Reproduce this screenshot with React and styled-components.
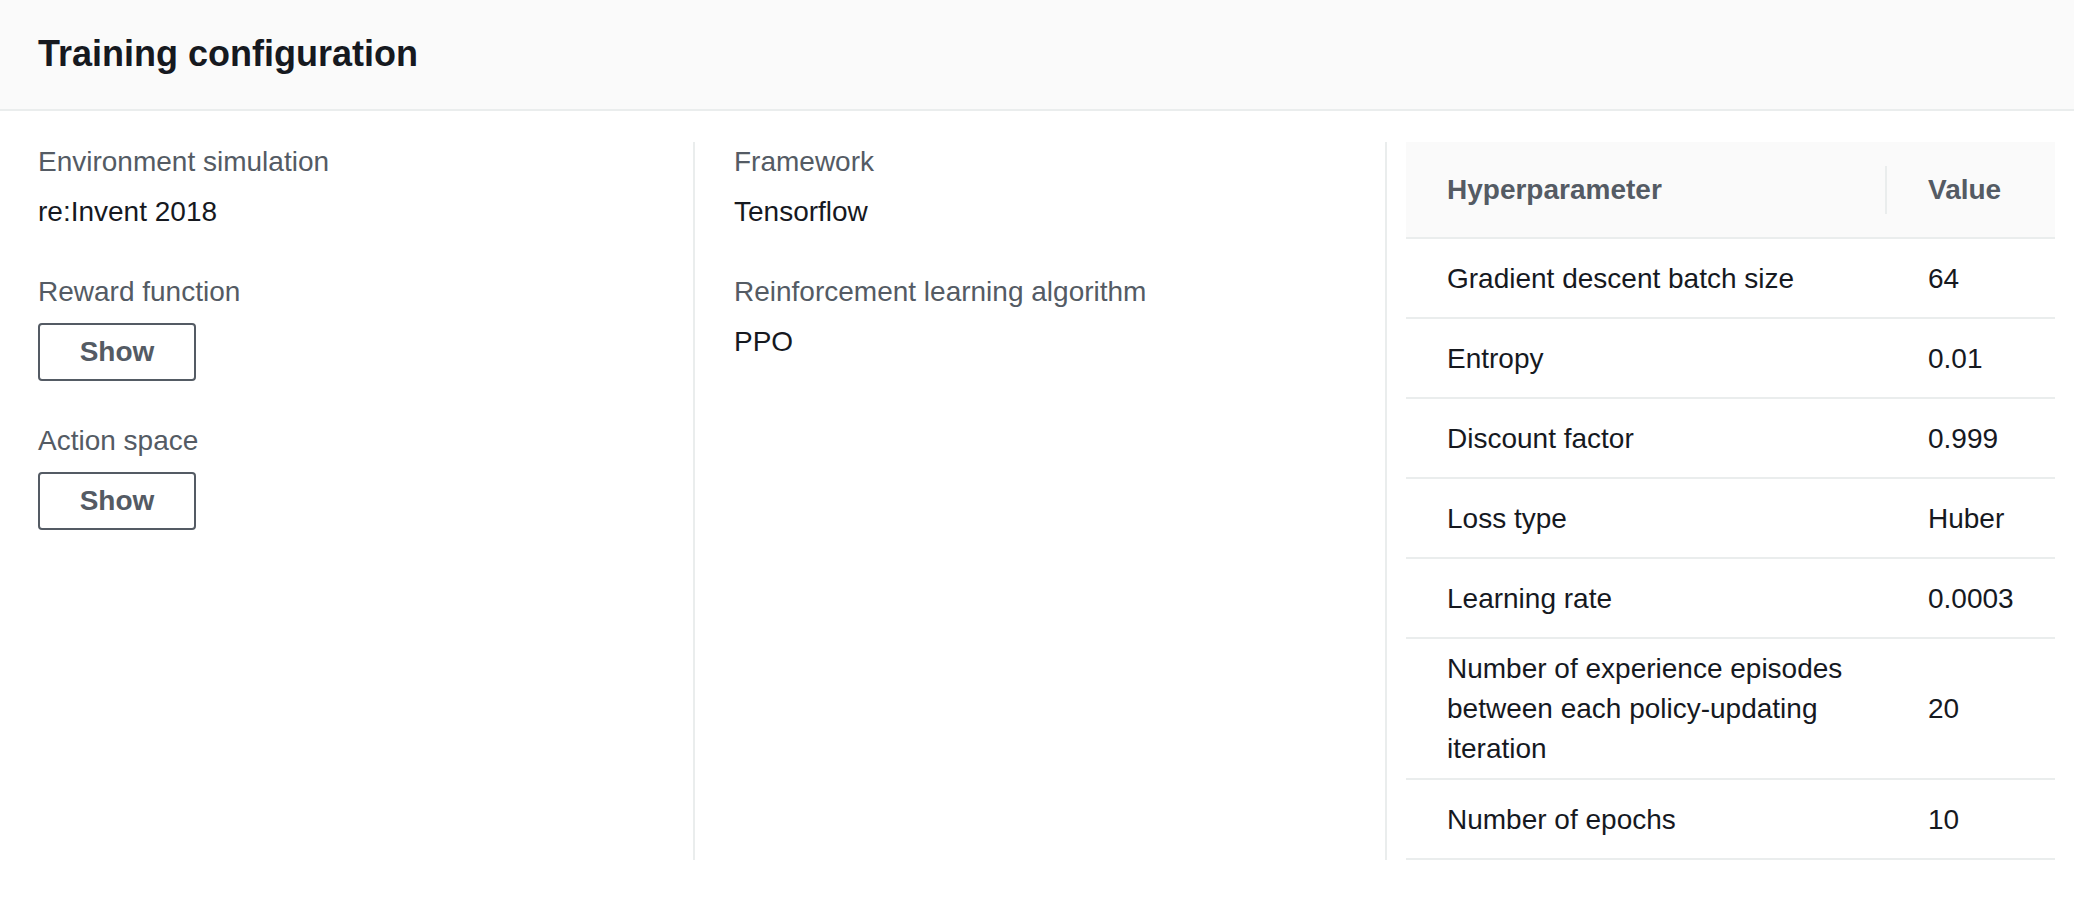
import React from 'react';
import styled, { createGlobalStyle } from 'styled-components';

const GlobalStyle = createGlobalStyle`
  html, body {
    margin: 0;
    padding: 0;
    background: #ffffff;
  }
  body {
    font-family: 'Liberation Sans', Arial, sans-serif;
    color: #16191f;
  }
  * {
    box-sizing: border-box;
  }
`;

const Panel = styled.section`
  width: 100%;
  background: #ffffff;
`;

const PanelHeader = styled.header`
  height: 111px;
  display: flex;
  align-items: center;
  padding: 0 38px 2px;
  background: #fafafa;
  border-bottom: 2px solid #eaeded;
`;

const PanelTitle = styled.h2`
  margin: 0;
  font-size: 36px;
  line-height: 44px;
  font-weight: 700;
  color: #16191f;
`;

const ColumnGrid = styled.div`
  display: grid;
  grid-template-columns: 655px 692px 1fr;
  padding: 31px 19px 0 38px;
`;

const Column = styled.div`
  display: flex;
  flex-direction: column;
  gap: 40px;
  padding-left: ${p => p.$pad || 0}px;
  border-left: ${p => (p.$divider ? '2px solid #eaeded' : 'none')};
`;

const Field = styled.div`
  display: flex;
  flex-direction: column;
  align-items: flex-start;
  gap: ${p => (p.$button ? 11 : 10)}px;
`;

const Label = styled.div`
  font-size: 28px;
  line-height: 40px;
  color: #545b64;
`;

const Value = styled.div`
  font-size: 28px;
  line-height: 40px;
  color: #16191f;
`;

const ShowButton = styled.button`
  width: 158px;
  height: 58px;
  padding: 0;
  background: #ffffff;
  border: 2px solid #545b64;
  border-radius: 4px;
  font-family: 'Liberation Sans', Arial, sans-serif;
  font-size: 28px;
  font-weight: 700;
  color: #545b64;
  cursor: pointer;
`;

const Table = styled.table`
  width: 100%;
  border-collapse: separate;
  border-spacing: 0;
  font-size: 28px;
  line-height: 40px;
`;

const HeadCell = styled.th`
  position: relative;
  height: 97px;
  padding: 0 20px 0 41px;
  text-align: left;
  font-weight: 700;
  color: #545b64;
  background: #fafafa;
  border-bottom: 2px solid #eaeded;

  &:first-child {
    width: 481px;
  }

  &:first-child::after {
    content: '';
    position: absolute;
    right: 0;
    top: 24px;
    width: 2px;
    height: 48px;
    background: #eaeded;
  }
`;

const Cell = styled.td`
  height: 80px;
  padding: 10px 20px 9px 41px;
  vertical-align: middle;
  color: #16191f;
  border-bottom: 2px solid #eaeded;
`;

const hyperparameters = [
  { name: 'Gradient descent batch size', value: '64' },
  { name: 'Entropy', value: '0.01' },
  { name: 'Discount factor', value: '0.999' },
  { name: 'Loss type', value: 'Huber' },
  { name: 'Learning rate', value: '0.0003' },
  { name: 'Number of experience episodes between each policy-updating iteration', value: '20' },
  { name: 'Number of epochs', value: '10' }
];

export default function App() {
  return (
    <>
      <GlobalStyle />
      <Panel>
        <PanelHeader>
          <PanelTitle>Training configuration</PanelTitle>
        </PanelHeader>

        <ColumnGrid>
          <Column>
            <Field>
              <Label>Environment simulation</Label>
              <Value>re:Invent 2018</Value>
            </Field>
            <Field $button>
              <Label>Reward function</Label>
              <ShowButton>Show</ShowButton>
            </Field>
            <Field $button>
              <Label>Action space</Label>
              <ShowButton>Show</ShowButton>
            </Field>
          </Column>

          <Column $divider $pad={39}>
            <Field>
              <Label>Framework</Label>
              <Value>Tensorflow</Value>
            </Field>
            <Field>
              <Label>Reinforcement learning algorithm</Label>
              <Value>PPO</Value>
            </Field>
          </Column>

          <Column $divider $pad={19}>
            <Table>
              <thead>
                <tr>
                  <HeadCell>Hyperparameter</HeadCell>
                  <HeadCell>Value</HeadCell>
                </tr>
              </thead>
              <tbody>
                {hyperparameters.map(row => (
                  <tr key={row.name}>
                    <Cell>{row.name}</Cell>
                    <Cell>{row.value}</Cell>
                  </tr>
                ))}
              </tbody>
            </Table>
          </Column>
        </ColumnGrid>
      </Panel>
    </>
  );
}
